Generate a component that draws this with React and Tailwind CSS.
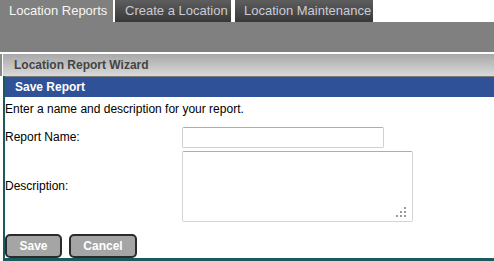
export default function App() {
  return (
    <div className="w-[494px] h-[261px] bg-white overflow-hidden font-['Liberation_Sans',Arial,sans-serif]">
      {/* Tabs */}
      <div className="flex h-[22px]">
        <div className="w-[113px] bg-[#808080] text-[#f6f6f6] text-[13px] leading-[22px] pl-[9px] whitespace-nowrap">
          Location Reports
        </div>
        <div className="w-[2px]" />
        <div className="w-[116px] bg-gradient-to-b from-[#5e5e5e] to-[#383838] text-[#c9ccd6] text-[13px] leading-[22px] pl-[10px] whitespace-nowrap">
          Create a Location
        </div>
        <div className="w-[4px]" />
        <div className="w-[138px] bg-gradient-to-b from-[#5e5e5e] to-[#383838] text-[#c9ccd6] text-[13px] leading-[22px] pl-[9px] whitespace-nowrap">
          Location Maintenance
        </div>
      </div>
      {/* Gray band */}
      <div className="h-[30px] bg-[#808080]" />
      <div className="h-[2px] bg-white" />
      {/* Panel header */}
      <div className="flex h-[22px]">
        <div className="w-[2px] bg-[#8a8a8a]" />
        <div className="w-[1px] bg-white" />
        <div className="flex-1 bg-gradient-to-b from-[#a8a8a8] to-[#dadada] text-[#444444] text-[12px] font-bold leading-[22px] pl-[11px]">
          Location Report Wizard
        </div>
      </div>
      {/* Panel body */}
      <div className="ml-[3px] border-l-2 border-b-[3px] border-[#1b5a5c] h-[185px]">
        <div className="h-[21px] bg-[#2e5198] border-t border-[#7a7a7a] text-white text-[12px] font-bold leading-[20px] pl-[10px]">
          Save Report
        </div>
        <div className="text-[12px] text-black leading-[14px] pt-[5px]">
          Enter a name and description for your report.
        </div>
        <div className="flex items-center h-[22px] mt-[10px]">
          <div className="w-[177px] text-[12px] text-black">Report Name:</div>
          <input
            type="text"
            className="w-[202px] h-[21px] bg-white border border-[#cfd0d6] border-t-[#aeaeae] rounded-[2px] outline-none"
          />
        </div>
        <div className="flex items-center h-[72px] mt-[2px]">
          <div className="w-[177px] text-[12px] text-black">Description:</div>
          <div className="relative">
            <textarea className="block w-[231px] h-[71px] bg-white border border-[#d3d4da] border-t-[#aeaeae] rounded-[2px] resize-none outline-none" />
            <svg className="absolute right-[6px] bottom-[4px]" width="12" height="12" viewBox="0 0 12 12">
              <rect x="9" y="1" width="2" height="2" fill="#9a9a9a" />
              <rect x="5" y="5" width="2" height="2" fill="#9a9a9a" />
              <rect x="9" y="5" width="2" height="2" fill="#9a9a9a" />
              <rect x="1" y="9" width="2" height="2" fill="#9a9a9a" />
              <rect x="5" y="9" width="2" height="2" fill="#9a9a9a" />
              <rect x="9" y="9" width="2" height="2" fill="#9a9a9a" />
            </svg>
          </div>
        </div>
        <div className="flex gap-[7px] mt-[12px]">
          <button className="w-[57px] h-[24px] bg-[#a5a5a5] border-2 border-[#2b2b2b] rounded-[5px] text-white text-[12px] font-bold">
            Save
          </button>
          <button className="w-[68px] h-[24px] bg-[#a5a5a5] border-2 border-[#2b2b2b] rounded-[5px] text-white text-[12px] font-bold">
            Cancel
          </button>
        </div>
      </div>
    </div>
  );
}
